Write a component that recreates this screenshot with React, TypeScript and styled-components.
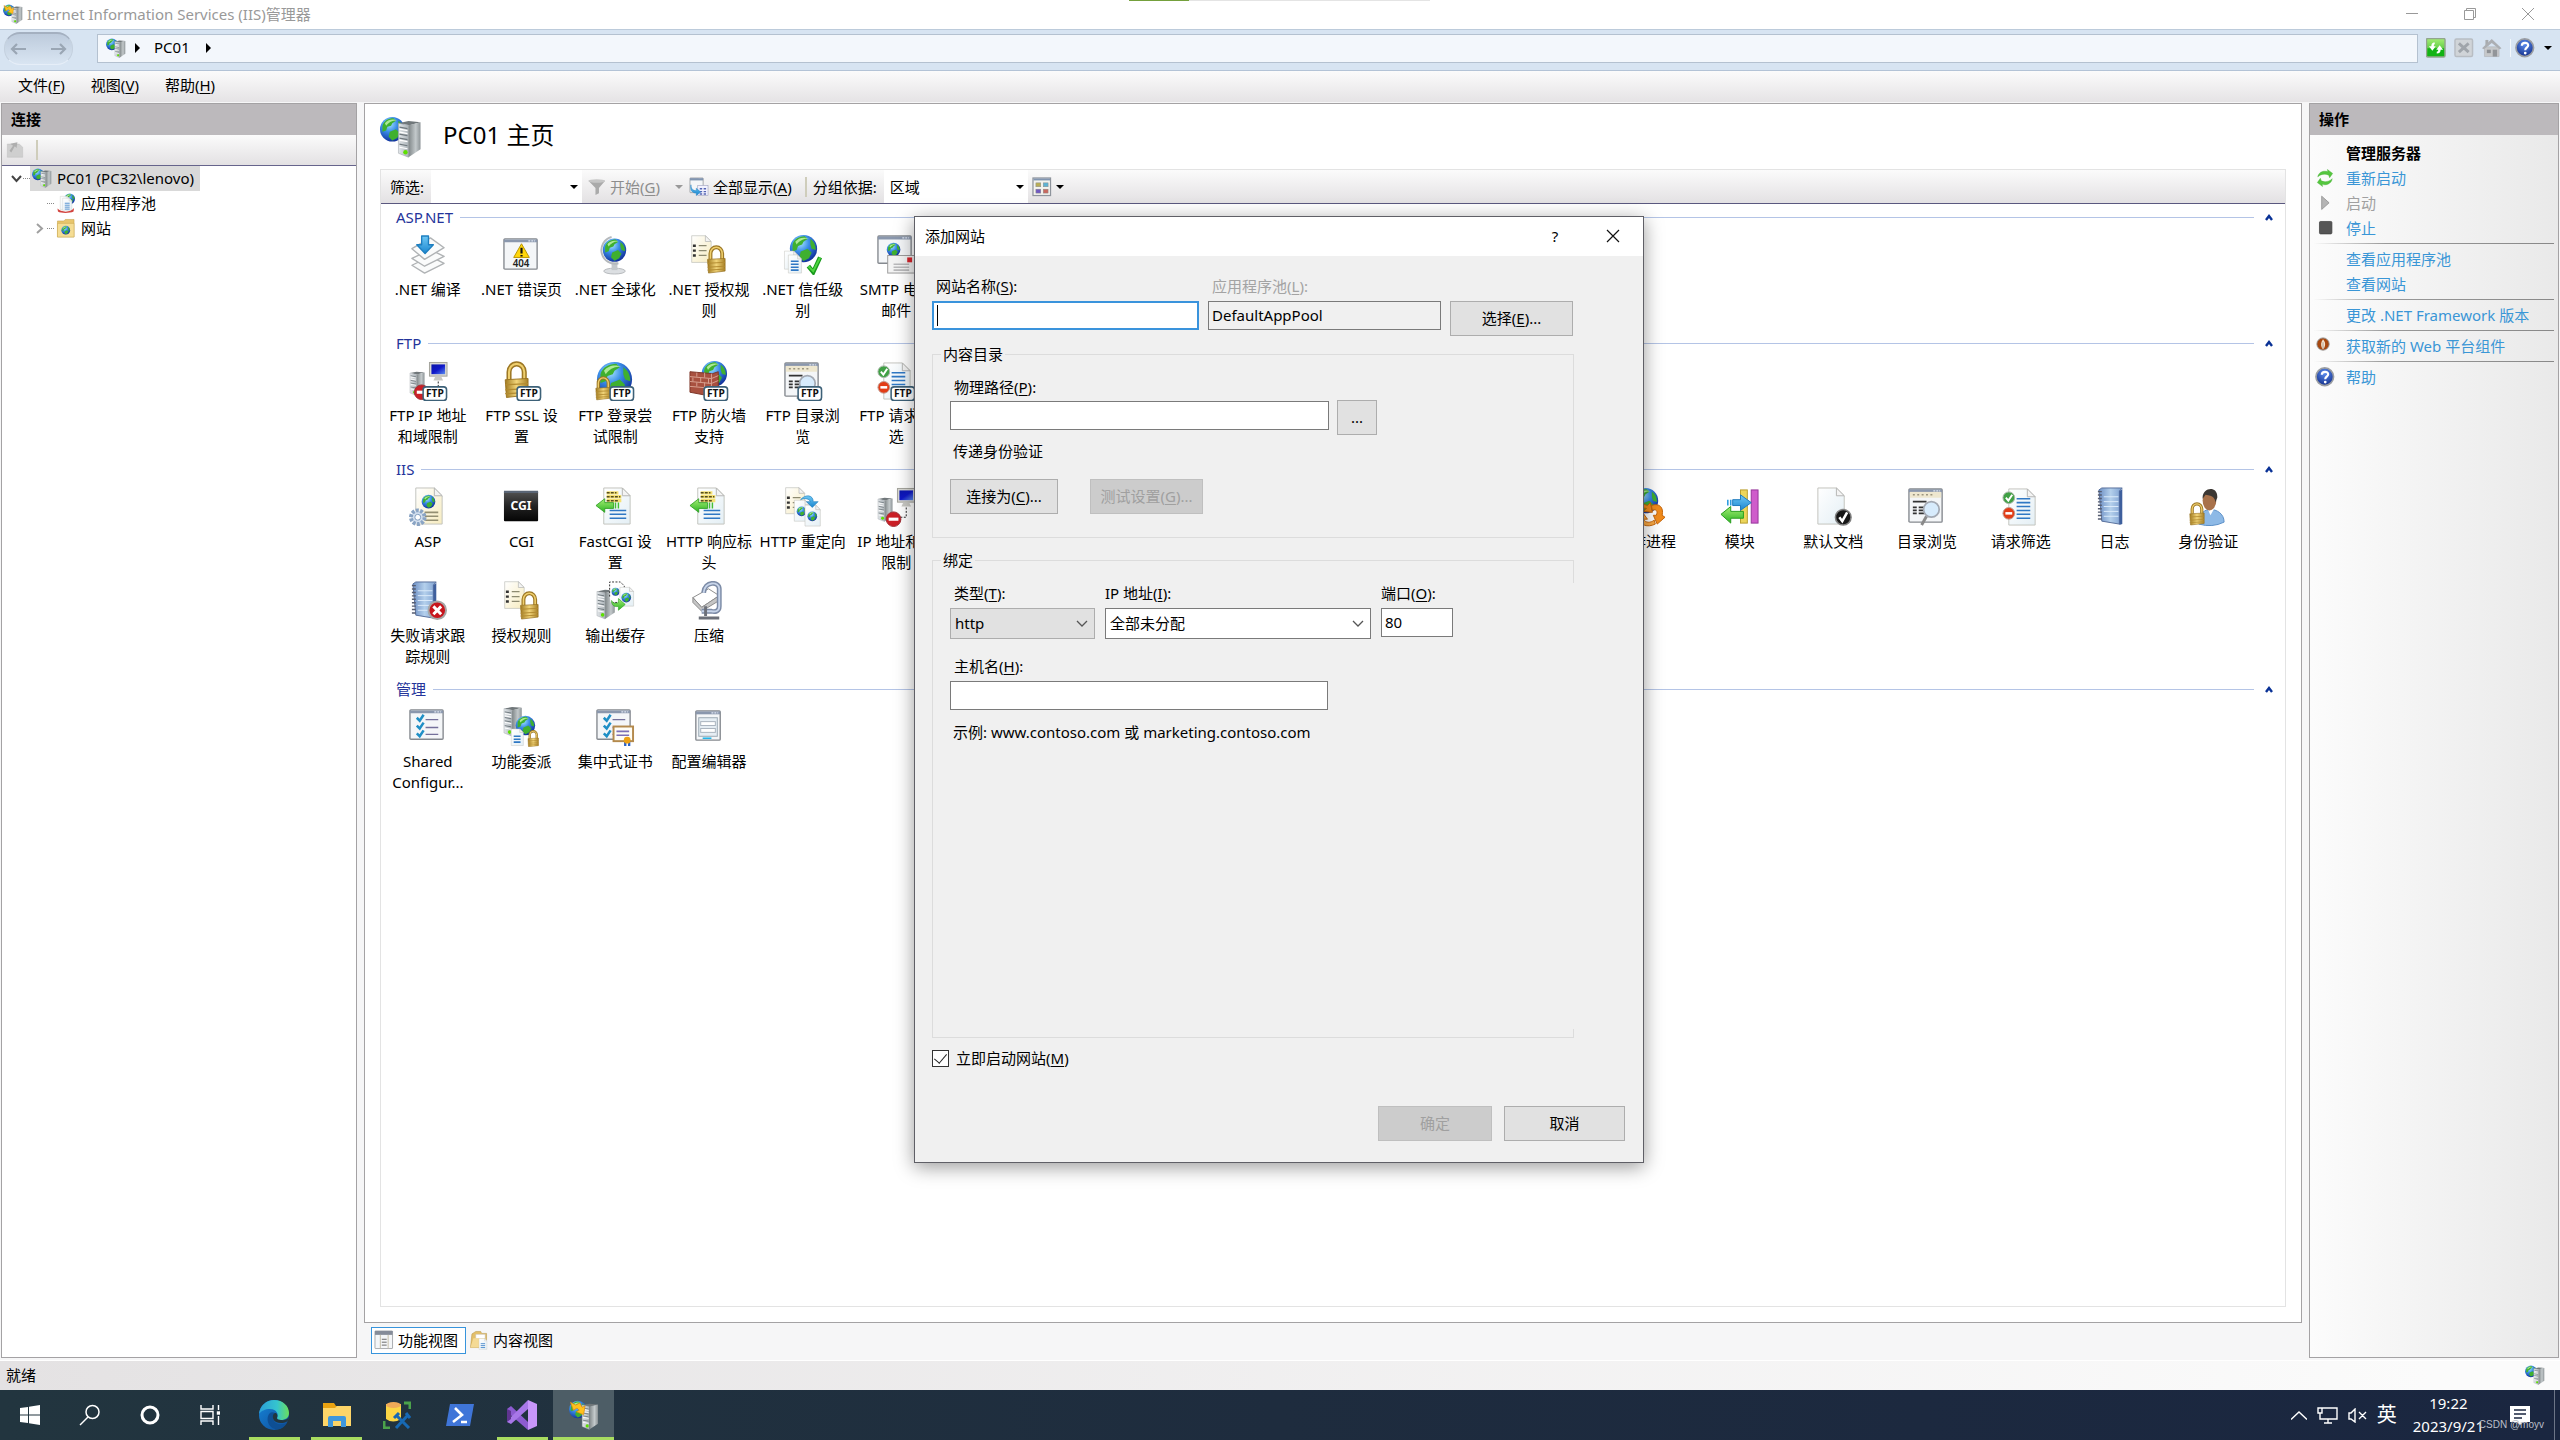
import React from "react";
import styled, { createGlobalStyle, css } from "styled-components";

const GlobalStyle = createGlobalStyle`
  * { box-sizing: border-box; }
  body {
    margin: 0;
    background: #f0f0f0;
    color: #000;
    font-family: "Noto Sans", "Noto Sans CJK SC", sans-serif;
    font-size: 15px;
    line-height: 20px;
  }
  button, input, select { font: inherit; color: inherit; margin: 0; }
  button { padding: 0; border: 0; background: none; }
  svg { display: block; flex: none; }
  u { text-underline-offset: 2px; }
`;

/* ---------- drawing primitives ---------- */

const Hidden = styled.svg`
  position: absolute;
`;

const Defs = () => (
  <Hidden width="0" height="0" aria-hidden="true">
    <defs>
      <radialGradient id="ocean" cx="0.38" cy="0.28" r="0.8">
        <stop offset="0" stopColor="#a9e6ff" />
        <stop offset="0.4" stopColor="#3b8ee8" />
        <stop offset="1" stopColor="#0a2390" />
      </radialGradient>
      <linearGradient id="steel" x1="0" x2="1">
        <stop offset="0" stopColor="#7f8688" />
        <stop offset="0.6" stopColor="#c3c9cb" />
        <stop offset="1" stopColor="#8d9497" />
      </linearGradient>
      <linearGradient id="face" x1="0" x2="1">
        <stop offset="0" stopColor="#e3e7ea" />
        <stop offset="1" stopColor="#aab2b7" />
      </linearGradient>
      <linearGradient id="gold" x1="0" x2="1">
        <stop offset="0" stopColor="#a07a20" />
        <stop offset="0.5" stopColor="#f2d57a" />
        <stop offset="1" stopColor="#a77f25" />
      </linearGradient>
      <linearGradient id="cream" x1="0" x2="1" y2="1">
        <stop offset="0" stopColor="#ffffff" />
        <stop offset="1" stopColor="#f7ecc0" />
      </linearGradient>
      <linearGradient id="paper" x1="0" x2="1" y2="1">
        <stop offset="0" stopColor="#ffffff" />
        <stop offset="1" stopColor="#e4eff5" />
      </linearGradient>
      <linearGradient id="cgi" x2="0" y2="1">
        <stop offset="0" stopColor="#555" />
        <stop offset="0.5" stopColor="#222" />
        <stop offset="1" stopColor="#050505" />
      </linearGradient>
      <linearGradient id="book" x1="0" x2="1">
        <stop offset="0" stopColor="#6d8fc4" />
        <stop offset="0.5" stopColor="#b4d0ec" />
        <stop offset="1" stopColor="#7c9fd0" />
      </linearGradient>
      <linearGradient id="screen" x2="1" y2="1">
        <stop offset="0" stopColor="#0a16a8" />
        <stop offset="0.5" stopColor="#1018c8" />
        <stop offset="1" stopColor="#5a8cf0" />
      </linearGradient>
      <linearGradient id="green" x2="0" y2="1">
        <stop offset="0" stopColor="#a5ee75" />
        <stop offset="1" stopColor="#2bb322" />
      </linearGradient>
      <linearGradient id="blue" x2="0" y2="1">
        <stop offset="0" stopColor="#6fc8f5" />
        <stop offset="1" stopColor="#1a86cf" />
      </linearGradient>
      <radialGradient id="help" cx="0.5" cy="0.3" r="0.7">
        <stop offset="0" stopColor="#5d8ff0" />
        <stop offset="1" stopColor="#132f8c" />
      </radialGradient>
      <linearGradient id="edgeTop" x1="0" x2="1">
        <stop offset="0" stopColor="#2b9fd8" />
        <stop offset="0.6" stopColor="#35c4cf" />
        <stop offset="1" stopColor="#6bdf5c" />
      </linearGradient>
      <linearGradient id="edgeBottom" x2="1" y2="1">
        <stop offset="0" stopColor="#1584d8" />
        <stop offset="1" stopColor="#0f4c98" />
      </linearGradient>
    </defs>
  </Hidden>
);

type P = { x: number; y: number; s?: number };

const at = (x: number, y: number, s = 1) => `translate(${x} ${y}) scale(${s})`;

const Globe = ({ x, y, s = 10 }: P) => (
  <g transform={at(x, y, s / 10)}>
    <circle r="10" fill="url(#ocean)" />
    <path
      d="M-8-3C-7-7-3-9 1-9L3-7 0-5-1-3-4-2-5 1-8 2ZM-2 2 3 0 6 3 4 7 0 9-3 6ZM5-7C8-5 9-2 9 1L6 0 5-3Z"
      fill="#3fb02f"
    />
    <path d="M-6-5C-4-8 1-9 4-7 1-8-3-6-5-3Z" fill="#c8f7b0" opacity="0.8" />
  </g>
);

/* tower drawn in a 22 x 36 cell */
const Tower = ({ x, y, s = 1 }: P) => (
  <g transform={at(x, y, s)}>
    <path d="M0 2 10 0 22 1 11 4Z" fill="#70777a" />
    <path d="M0 2 10 4 10 36 0 32Z" fill="url(#face)" stroke="#9aa1a5" strokeWidth="0.500" />
    <path d="M10 4 22 1 22 28 10 36Z" fill="url(#steel)" />
    <path d="M1 6 9 7.500M1 13 9 14.500M1 17 9 18.500M1 23 9 24.500" stroke="#70797e" strokeWidth="1.200" />
    <path d="M1 8 9 9.500M1 11 9 12.500M1 19 9 20.500M1 26 9 27.500" stroke="#fff" strokeWidth="1.200" />
    <circle cx="7" cy="31" r="2.200" fill="#5de000" />
  </g>
);

/* sheet drawn in a 28 x 38 cell */
const Sheet = ({ x, y, s = 1, fill = "url(#paper)" }: P & { fill?: string }) => (
  <g transform={at(x, y, s)}>
    <path d="M1 1H20L28 9V38H1Z" fill={fill} stroke="#c2c3bd" />
    <path d="M20 1V9H28Z" fill="#f4f4f4" stroke="#b5b6b4" />
  </g>
);

const Frame = ({ x, y, w, h }: { x: number; y: number; w: number; h: number }) => (
  <g>
    <rect x={x} y={y} width={w} height={h} rx="1" fill="#f4f6f8" stroke="#85898f" strokeWidth="1.4" />
    <path d={`M${x} ${y + 2}h${w}`} stroke="#8a97ad" strokeWidth="3" />
    <path d={`M${x + w - 9} ${y + 2}h7`} stroke="#dfe6f2" strokeWidth="1.2" strokeDasharray="2 1" />
  </g>
);

/* padlock drawn in a 20 x 28 cell */
const Lock = ({ x, y, s = 1 }: P) => (
  <g transform={at(x, y, s)}>
    <path d="M4 14V8a6 6.500 0 0 1 12 0V15" fill="none" stroke="#9c7724" strokeWidth="4" />
    <path d="M4 14V8a6 6.500 0 0 1 12 0V15" fill="none" stroke="#efcf6e" strokeWidth="1.600" />
    <path d="M1 14 19 13V26L2 28Z" fill="url(#gold)" stroke="#97701c" strokeWidth="0.700" />
    <path d="M1 18 19 17M1 22 19 21M1 25 19 24" stroke="#b38b30" />
  </g>
);

const Ftp = () => (
  <g>
    <rect x="15.500" y="26.500" width="24" height="14" rx="3" fill="#fff" stroke="#3d6178" strokeWidth="1.600" />
    <text x="27.500" y="37.300" fontSize="10.500" fontWeight="700" textAnchor="middle" fill="#111">FTP</text>
  </g>
);

const Bullets = ({ x, y }: P) => (
  <g transform={at(x, y)}>
    <path d="M3 12h3M3 17h3M3 22h3" stroke="#333" strokeWidth="2.400" />
    <path d="M9 12h8M9 17h8M9 22h8" stroke="#8d8a70" strokeWidth="1.300" />
  </g>
);

const Lines = ({ x, y, w, n, gap = 4, color = "#2f78c4" }: { x: number; y: number; w: number; n: number; gap?: number; color?: string }) => (
  <path
    d={Array.from({ length: n }, (_, i) => `M${x} ${y + i * gap}h${w}`).join("")}
    stroke={color}
    strokeWidth="1.600"
  />
);

const NoEntry = ({ x, y, s = 1 }: P) => (
  <g transform={at(x, y, s)}>
    <circle r="7.500" fill="#cb1f26" stroke="#9f3036" />
    <rect x="-5" y="-1.600" width="10" height="3.200" fill="#fff" />
  </g>
);

const Network = () => (
  <g>
    <Tower x={2} y={11} s={0.68} />
    <rect x="22" y="1.500" width="18" height="14" fill="#d9d9d4" stroke="#a3a39c" />
    <rect x="24" y="3.500" width="14" height="10" fill="url(#screen)" />
    <path d="M28 16h6l2 4H26Z" fill="#c9c9c4" />
    <path d="M31 21v10h-6" fill="none" stroke="#222" strokeDasharray="2 1.500" />
  </g>
);

const Browse = () => (
  <g>
    <Frame x={2} y={2} w={34} h={34} />
    <rect x="3" y="5" width="32" height="6" fill="#eee7cf" />
    <path d="M6 8h20" stroke="#9c9680" strokeWidth="1.600" strokeDasharray="2 2.500" />
    <path d="M6 15h14M6 21h4M12 21h6M6 24h4M12 24h6M6 27h4M12 27h6" stroke="#333" strokeWidth="1.800" />
    <path d="M20 30 15 39" stroke="#8a8a8a" strokeWidth="3" />
    <circle cx="25" cy="23" r="8" fill="#d7ebfc" stroke="#a3a9b3" strokeWidth="1.800" />
  </g>
);

const Filter = () => (
  <g>
    <Sheet x={7} y={1} />
    <Lines x={16} y={12} w={14} n={6} />
    <circle cx="8" cy="11" r="6" fill="#40a045" stroke="#a9b6a9" />
    <path d="M5 11 7.500 14 11.500 8" fill="none" stroke="#fff" strokeWidth="2" />
    <circle cx="8" cy="27" r="6" fill="#e23d17" stroke="#c19c92" />
    <path d="M4.500 27h7" stroke="#fff" strokeWidth="2.600" />
  </g>
);

const Rules = () => (
  <g>
    <Sheet x={2} y={0} s={0.74} fill="url(#cream)" />
    <Bullets x={1} y={-1} />
    <Lock x={18} y={11} />
  </g>
);

const Header = () => (
  <g>
    <Sheet x={8} y={0} />
    <path d="M12 6h12M12 10h15M12 14h15" stroke="#f5e173" strokeWidth="3.500" />
    <path d="M12 6h10M12 10h14M12 14h12" stroke="#554d1e" strokeWidth="1.500" strokeDasharray="3 1.200" />
    <Lines x={15} y={24} w={17} n={3} />
    <path d="M1 19 10 12V16H19V22H10V26Z" fill="url(#green)" stroke="#259a1b" strokeWidth="0.800" />
    <path d="M21 16v6M24 16v6" stroke="#45be35" strokeWidth="1.500" />
  </g>
);

const Notebook = () => (
  <g>
    <path d="M5 3 8 1H29L26 4V38L8 35Z" fill="url(#book)" stroke="#576f9b" />
    <path d="M26 4 29 2V38L26 39Z" fill="#3e5f9d" />
    <path d="M10 10H25M10 15H25M10 20H25M10 25H25M10 30H25" stroke="#dbeafa" strokeWidth="1" />
    <path d="M6 4V35" stroke="#555c70" strokeWidth="4" strokeDasharray="1.500 2" />
  </g>
);

const Checklist = () => (
  <g>
    <Frame x={2} y={3} w={34} h={30} />
    <path d="M9 11l3 3 4-6M9 19l3 3 4-6M9 27l3 3 4-6" fill="none" stroke="#1f8fc6" strokeWidth="2.600" />
    <path d="M18 13h13M18 21h13M18 28h13" stroke="#74709a" strokeWidth="1.400" />
  </g>
);

const SiteServer = () => (
  <g>
    <Globe x={12} y={13} s={12} />
    <Tower x={18} y={5} s={0.98} />
  </g>
);

const drawings: Record<string, React.ReactNode> = {
  siteServer: <SiteServer />,
  manager: (
    <g>
      <SiteServer />
      <path d="M2 3 9 7 15 4 18 10 22 8 20 20 10 16 14 14 11 11 6 14Z" fill="#ffc21c" stroke="#d9861a" />
    </g>
  ),
  compile: (
    <g fill="#fafbfb" stroke="#b0b3b5" strokeWidth="1.400" strokeLinejoin="round">
      <path d="M4 31 23 22 37 29 17 39Z" />
      <path d="M4 24 23 15 37 22 17 32Z" />
      <path d="M4 14 23 3 37 13 17 25Z" />
      <path d="M14 1h7v9h5l-8.500 9L9 10h5Z" fill="url(#blue)" stroke="#1e7fc0" />
    </g>
  ),
  error404: (
    <g>
      <Frame x={2} y={4} w={34} h={31} />
      <path d="M20 9 28 23H12Z" fill="#ffd60a" stroke="#b99400" strokeLinejoin="round" />
      <path d="M20 13v6M20 20.500v1.500" stroke="#111" strokeWidth="2.200" />
      <text x="19.500" y="33" fontSize="10" fontWeight="600" textAnchor="middle" fill="#222">404</text>
    </g>
  ),
  globalize: (
    <g>
      <ellipse cx="20" cy="37" rx="11" ry="3" fill="#dcdfe2" stroke="#b6b9bc" />
      <path d="M20 28v8" stroke="#c4c8cb" strokeWidth="6" />
      <path d="M17 2A13.500 13.500 0 0 0 24 29" fill="none" stroke="#b5b9bc" strokeWidth="2" />
      <Globe x={20} y={15.5} s={12} />
    </g>
  ),
  rules: <Rules />,
  trust: (
    <g>
      <Globe x={21} y={14} s={14} />
      <Sheet x={1} y={16} s={0.5} />
      <Sheet x={5} y={20} s={0.5} />
      <Lines x={8} y={27} w={8} n={4} gap={3} />
      <path d="M26 32 31 38 38 23" fill="none" stroke="#1a9a1d" strokeWidth="4.500" />
      <path d="M26 32 31 37 38 23" fill="none" stroke="#4fd63f" strokeWidth="2" />
    </g>
  ),
  smtp: (
    <g>
      <Frame x={2} y={1} w={34} h={28} />
      <Globe x={18} y={15} s={7} />
      <rect x="12" y="21" width="28" height="18" fill="#f3f3f3" stroke="#9a9a9a" />
      <Lines x={18} y={30} w={16} n={3} gap={3} color="#b9b9bb" />
      <rect x="32" y="23" width="5" height="5" fill="#d8242c" />
    </g>
  ),
  ftpIp: <g><Network /><NoEntry x={14} y={32} /><Ftp /></g>,
  ftpSsl: <g><Lock x={2} y={1} s={1.3} /><Ftp /></g>,
  ftpLogin: <g><Globe x={20} y={19} s={18} /><Lock x={0} y={16} s={0.85} /><Ftp /></g>,
  ftpWall: (
    <g>
      <Globe x={26} y={13} s={13} />
      <path d="M1 11 24 13 30 11V32L22 36 1 32Z" fill="#a8503f" stroke="#7d3528" />
      <path d="M1 16 23 18 30 15M1 21 23 23 30 20M1 26 23 28M8 12v4M16 12v5M4 17v4M12 17v5M20 18v5M8 22v4M16 22v5M23 13v22" fill="none" stroke="#d8a090" />
      <Ftp />
    </g>
  ),
  ftpBrowse: <g><Browse /><Ftp /></g>,
  ftpFilter: <g><Filter /><Ftp /></g>,
  asp: (
    <g>
      <Sheet x={7} y={0} fill="url(#cream)" />
      <Globe x={21} y={15} s={7} />
      <Lines x={17} y={26} w={14} n={3} color="#948f72" />
      <circle cx="10" cy="31" r="7" fill="#d4e0ef" stroke="#8aa4c4" strokeWidth="4" strokeDasharray="3 1.400" />
      <circle cx="10" cy="31" r="3" fill="#fff" stroke="#7f9bbd" />
    </g>
  ),
  cgi: (
    <g>
      <rect x="2" y="4" width="35" height="31" rx="1" fill="url(#cgi)" />
      <path d="M2 5h35" stroke="#5a6575" strokeWidth="2.500" />
      <text x="19.500" y="24" fontSize="12.500" fontWeight="700" textAnchor="middle" fill="#fff">CGI</text>
    </g>
  ),
  header: <Header />,
  redirect: (
    <g>
      <Sheet x={2} y={0} s={0.72} fill="url(#cream)" />
      <Bullets x={1} y={-1} />
      <Sheet x={11} y={13} s={0.58} />
      <Globe x={19} y={25} s={5} />
      <Sheet x={22} y={18} s={0.58} />
      <Globe x={30} y={30} s={5} />
      <path d="M18 13C23 7 31 8 31 15H36L30 21 24 15H28C27 12 22 11 18 13Z" fill="url(#blue)" stroke="#1c7ab8" strokeWidth="0.600" />
    </g>
  ),
  ip: <g><Network /><NoEntry x={18} y={33} /></g>,
  worker: (
    <g>
      <Globe x={20} y={14} s={13} />
      <path d="M10 24C12 17 18 17 22 19L25 16 27 26 18 25 21 22C17 21 15 23 15 27Z" fill="#f28c1c" stroke="#c46408" />
      <path d="M26 19C34 16 39 21 37 29L40 31 32 38 28 29 31 29C33 25 31 22 27 24Z" fill="#f28c1c" stroke="#c46408" />
      <path d="M30 38C22 42 14 39 13 32L10 31 17 26 22 33H18C20 37 25 37 29 34Z" fill="#f9a945" stroke="#c46408" />
    </g>
  ),
  modules: (
    <g>
      <rect x="21" y="3" width="7" height="34" fill="#ecd55a" stroke="#b89d2c" />
      <rect x="32" y="3" width="7" height="34" fill="#cf5ccb" stroke="#96369a" />
      <path d="M13 13h8V8l11 8-11 8v-5h-8Z" fill="url(#blue)" stroke="#1c79bd" />
      <path d="M8 13v6M11 13v6" stroke="#2b9be0" strokeWidth="1.600" />
      <path d="M1 28 11 20v5h13v7H11v5Z" fill="url(#green)" stroke="#269c1d" />
    </g>
  ),
  defaultDoc: (
    <g>
      <Sheet x={4} y={0} />
      <circle cx="31" cy="31" r="8" fill="#161616" stroke="#808080" strokeWidth="1.600" />
      <path d="M27 31 30 35 35 26" fill="none" stroke="#fff" strokeWidth="2.600" />
    </g>
  ),
  browse: <Browse />,
  filter: <Filter />,
  log: <Notebook />,
  auth: (
    <g>
      <path d="M11 38C11 27 17 23 23 23S37 27 37 36Q25 42 11 38Z" fill="#8db9e6" stroke="#5c8fc6" />
      <path d="M20 22 23 29 27 22Z" fill="#fff" />
      <ellipse cx="22" cy="14" rx="7" ry="10" fill="#a8714a" />
      <path d="M15 12C14 0 31-2 30 11L28 16C28 12 26 9 18 8Z" fill="#3c3733" />
      <Lock x={1} y={16} s={0.82} />
    </g>
  ),
  failed: (
    <g>
      <Notebook />
      <circle cx="30" cy="30" r="9" fill="#c8161d" stroke="#a6a6a6" strokeWidth="2" />
      <path d="M26 26 34 34M34 26 26 34" stroke="#fff" strokeWidth="3" />
    </g>
  ),
  cache: (
    <g>
      <Tower x={2} y={9} s={0.83} />
      <path d="M15 16V1H26L30 5V22H16" fill="#fff" stroke="#333" strokeDasharray="2 1.500" />
      <Globe x={21} y={11} s={4} />
      <Sheet x={25} y={6} s={0.52} />
      <Globe x={32} y={17} s={5} />
      <path d="M17 20C19 24 22 23 24 22V18L31 24 24 30V26C20 27 17 25 17 20Z" fill="url(#green)" stroke="#249c1b" strokeWidth="0.600" />
    </g>
  ),
  compress: (
    <g>
      <path d="M4 17 20 8 31 15 13 27Z" fill="#fff" stroke="#8b8b8b" />
      <path d="M4 17V22L13 31 31 20V15L13 27Z" fill="#c5c5c5" stroke="#8b8b8b" />
      <path d="M15 12C16 0 31 0 31 8V26C31 31 27 32 23 31H13" fill="none" stroke="#7c8ba6" strokeWidth="5" />
      <path d="M15 12C16 0 31 0 31 8V26C31 31 27 32 23 31H13" fill="none" stroke="#c8d5ea" strokeWidth="2" />
      <path d="M17 26v10M10 38H31" stroke="#6c7079" strokeWidth="3" />
    </g>
  ),
  checklist: <Checklist />,
  delegate: (
    <g>
      <Tower x={2} y={0} s={0.83} />
      <Globe x={24} y={19} s={10} />
      <Sheet x={9} y={22} s={0.46} />
      <Lines x={12} y={30} w={7} n={3} gap={3} />
      <Lock x={26} y={24} s={0.6} />
    </g>
  ),
  cert: (
    <g>
      <Checklist />
      <rect x="19" y="20" width="20" height="15" fill="#fffdf5" stroke="#b48a4d" strokeWidth="2" />
      <Lines x={22} y={25} w={13} n={2} color="#7d6fb6" />
      <path d="M31 34v6M35 34v6" stroke="#2a62c8" strokeWidth="2.400" />
      <circle cx="33" cy="34" r="3.500" fill="#eda013" />
    </g>
  ),
  editor: (
    <g>
      <Frame x={7} y={4} w={25} h={30} />
      <rect x="10" y="11" width="19" height="19" fill="#e6eef4" stroke="#9aa7b2" />
      <rect x="12" y="15" width="15" height="4" fill="#fff" stroke="#a8b2bd" />
      <rect x="12" y="22" width="15" height="4" fill="#fff" stroke="#a8b2bd" />
      <path d="M14 32h9" stroke="#23b5e8" strokeWidth="1.600" />
    </g>
  ),
  pool: (
    <g>
      <Globe x={28} y={12} s={11} />
      <Sheet x={8} y={6} s={0.74} />
      <Sheet x={13} y={10} s={0.7} />
      <Lines x={18} y={21} w={10} n={4} />
      <path d="M3 32C10 40 30 41 37 31L36 38C28 42 10 42 4 38Z" fill="#d2433e" />
    </g>
  ),
  sites: (
    <g>
      <path d="M3 6H16L19 3H37V39H3Z" fill="#e8c66d" stroke="#bf9a3f" />
      <path d="M3 11H37V39H3Z" fill="#f5dd94" stroke="#c7a34b" />
      <Globe x={20} y={25} s={9} />
    </g>
  ),
  content: (
    <g>
      <path d="M3 36 6 8 14 3H24L26 7H36V20L30 36Z" fill="#e3bf6a" stroke="#b18c3b" />
      <path d="M14 9H33V18H14Z" fill="#fff" stroke="#c9c9c9" />
      <path d="M3 36 9 17H34L29 36Z" fill="#f4da95" />
      <Sheet x={20} y={17} s={0.6} />
      <Lines x={24} y={28} w={9} n={3} />
    </g>
  ),
  featureView: (
    <g>
      <Frame x={2} y={2} w={36} h={36} />
      <path d="M2 6h36" stroke="#858c99" strokeWidth="8" />
      <path d="M13 10V38M29 10V38" stroke="#c4bea8" strokeWidth="2" />
      <Lines x={16} y={19} w={10} n={3} gap={6} color="#444" />
    </g>
  ),
  funnel: (
    <g>
      <path d="M1 6H39L25 23V35L17 39V23Z" fill="#aaa" />
      <ellipse cx="20" cy="7" rx="19" ry="4" fill="#c6c6c6" />
    </g>
  ),
  showAll: (
    <g>
      <Frame x={2} y={2} w={27} h={30} />
      <path d="M2 5h27" stroke="#8195b0" strokeWidth="4" />
      <rect x="18" y="17" width="21" height="21" fill="#f2f2ff" stroke="#8b8fae" />
      <path d="M22 24h5M30 24h5M22 30h5M30 30h5M22 35h5M30 35h5" stroke="#5564b3" strokeWidth="3" />
      <path d="M4 16C4 26 10 28 15 28V23L24 31 15 38V33C6 33 2 27 4 16Z" fill="url(#blue)" stroke="#1d7cc0" />
    </g>
  ),
  viewMode: (
    <g>
      <rect x="2" y="2" width="36" height="36" fill="#f4f3ee" stroke="#8e949c" strokeWidth="2.500" />
      <path d="M3 5h34" stroke="#8195b0" strokeWidth="4" />
      <g stroke="#8b8b8b">
        <rect x="8" y="12" width="10" height="8" fill="#b9ae55" />
        <rect x="23" y="12" width="10" height="8" fill="#5db3d4" />
        <rect x="8" y="25" width="10" height="8" fill="#7059c0" />
        <rect x="23" y="25" width="10" height="8" fill="#c9685e" />
      </g>
    </g>
  ),
  connect: (
    <g>
      <path d="M3 7H30L38 14V37H3Z" fill="#cfcfcf" stroke="#bababa" />
      <path d="M10 6 26 3 24 16 20 12 12 26 8 22 16 11Z" fill="#aeaeae" />
    </g>
  ),
  goRefresh: (
    <g>
      <rect x="1" y="1" width="38" height="38" rx="3" fill="url(#green)" stroke="#92a58e" strokeWidth="3" />
      <rect x="3" y="21" width="34" height="16" fill="#11b314" />
      <path d="M18 9C12 9 11 13 11 17H6L13 26 20 17H16C16 14 17 13 18 13Z" fill="#fff" />
      <path d="M22 32C28 32 30 28 30 24H35L28 15 21 24H25C25 27 24 28 22 28Z" fill="#fff" />
    </g>
  ),
  stopNav: (
    <g>
      <rect x="2" y="2" width="36" height="36" rx="3" fill="#d0d4d8" stroke="#b8bdc3" strokeWidth="3" />
      <path d="M10 11 30 29M30 11 10 29" stroke="#a0a5ab" strokeWidth="6" />
    </g>
  ),
  home: (
    <g>
      <path d="M5 18H35V38H5Z" fill="#c6c8ca" stroke="#a7aaae" />
      <path d="M7 4h6v12H7Z" fill="#a8abae" />
      <path d="M0 21 20 2 40 21 36 23 20 10 4 23Z" fill="#acafb3" />
      <path d="M22 24h9v14h-9Z" fill="#929599" />
      <path d="M10 24h8v7h-8Z" fill="#8e9195" />
    </g>
  ),
  help: (
    <g>
      <circle cx="20" cy="20" r="18" fill="url(#help)" stroke="#9a9da2" strokeWidth="3.500" />
      <path d="M14 16C14 8 27 8 27 15 27 20 21 19 21 25" fill="none" stroke="#fff" strokeWidth="4.500" />
      <circle cx="21" cy="31" r="2.800" fill="#fff" />
    </g>
  ),
  restart: (
    <g fill="#55c63f" stroke="#39a829" strokeWidth="0.800">
      <path d="M4 18C6 6 18 3 27 6L26 1 38 10 31 20 29 14C20 10 10 12 4 18Z" />
      <path d="M37 22C35 34 23 38 14 35L15 40 3 31 10 21 12 27C21 31 31 28 37 22Z" />
    </g>
  ),
  start: <path d="M12 3 31 20 12 37Z" fill="#b5b5b5" stroke="#8e8e8e" strokeWidth="2" />,
  stop: <rect x="4" y="4" width="34" height="34" rx="3" fill="#555" stroke="#3f3f3f" strokeWidth="2" />,
  webpi: (
    <g>
      <circle cx="16" cy="16" r="14" fill="#a84911" stroke="#8d8d8d" strokeWidth="2" />
      <path d="M16 5C22 12 22 18 18 26H14C10 18 11 12 16 5Z" fill="#f5e4cf" />
      <path d="M16 12V28" stroke="#c3b2a0" strokeWidth="3" />
    </g>
  ),
};

const Icon = ({ name, size = 20 }: { name: string; size?: number }) => (
  <svg width={size} height={size} viewBox="0 0 41 41" aria-hidden="true">
    {drawings[name]}
  </svg>
);

const DropArrow = ({ muted }: { muted?: boolean }) => (
  <svg width="8" height="4" viewBox="0 0 8 4" aria-hidden="true">
    <path d="M0 0H8L4 4Z" fill={muted ? "#999" : "#000"} />
  </svg>
);

const RightArrow = () => (
  <svg width="5" height="10" viewBox="0 0 5 10" aria-hidden="true">
    <path d="M0 0 5 5 0 10Z" fill="#000" />
  </svg>
);

/* ---------- window chrome ---------- */

const Desktop = styled.div`
  position: relative;
  display: flex;
  flex-direction: column;
  min-height: 100vh;
`;

const TitleBar = styled.header`
  display: flex;
  align-items: center;
  gap: 4px;
  height: 29px;
  padding: 0 3px 2px;
  background: #fff;
  color: #999;
`;

const WindowTitle = styled.h1`
  flex: 1;
  margin: 0;
  font-size: 15px;
  font-weight: 400;
  line-height: 20px;
`;

const WindowButtons = styled.div`
  display: flex;
`;

const WindowButton = styled.button`
  display: grid;
  place-items: center;
  width: 58px;
  height: 27px;
`;

const TopMark = styled.div`
  position: absolute;
  top: 0;
  left: 1129px;
  width: 301px;
  height: 1px;
  background: linear-gradient(90deg, #74a03c 60px, #e4e4e4 60px);
`;

const AddressBar = styled.div`
  display: flex;
  align-items: center;
  gap: 8px;
  height: 42px;
  padding: 0 8px 4px 4px;
  background: #d7e4f2;
  border-top: 1px solid #bccbdb;
  border-bottom: 1px solid #b3c3d6;
`;

const NavButtons = styled.div`
  display: flex;
  justify-content: space-between;
  align-items: center;
  width: 69px;
  height: 33px;
  margin-right: 16px;
  padding: 0 5px;
  border-radius: 16px;
  border: 1px solid #c4d0de;
  border-top: 2px solid #a4b0c0;
  border-bottom-color: #e6eef8;
  background: linear-gradient(#bdcbdc, #d9e5f2);
`;

const Crumbs = styled.nav`
  flex: 1;
  display: flex;
  align-items: center;
  height: 29px;
  padding-left: 8px;
  gap: 9px;
  background: #f3f7fc;
  border: 1px solid #b4c1d0;
`;

const CrumbButton = styled.button`
  padding: 0 7px 2px 5px;
`;

const ToolButton = styled.button`
  display: flex;
  align-items: center;
  gap: 9px;
`;

const VLine = styled.span`
  width: 1px;
  height: 18px;
  margin-right: -4px;
  background: #f4f8fc;
`;

const MenuBar = styled.nav`
  display: flex;
  align-items: center;
  gap: 26px;
  height: 31px;
  padding: 0 0 3px 18px;
  background: linear-gradient(#fbfbfb, #e5e3e5);
`;

const Workspace = styled.main`
  flex: 1;
  display: flex;
  gap: 7px;
  padding: 1px 1px 2px;
  background: #f6f6f7;
`;

const panel = css`
  border: 1px solid #a4a2a4;
  background: #fff;
`;

const Connections = styled.aside`
  ${panel}
  width: 356px;
`;

const PanelHeading = styled.h2`
  margin: 0;
  padding: 0 9px;
  background: #bcb9bc;
  font-size: 15px;
  font-weight: 700;
  line-height: 31px;
`;

const PanelTools = styled.div`
  display: flex;
  align-items: center;
  gap: 12px;
  height: 31px;
  padding-left: 4px;
  background: linear-gradient(#fbfbfb, #e3e1e3);
  border-bottom: 1px solid #66648c;
`;

const ToolDivider = styled.span`
  width: 2px;
  height: 20px;
  background: #cfcdbb;
`;

const Tree = styled.ul`
  list-style: none;
  margin: 0;
  padding: 0;
`;

const TreeRow = styled.div<{ $depth: number }>`
  display: flex;
  align-items: center;
  height: 25px;
  padding-left: ${(p) => 7 + p.$depth * 24}px;
`;

const TreeToggle = styled.span`
  display: grid;
  place-items: center;
  width: 14px;
`;

const TreeStem = styled.span`
  width: 7px;
  border-top: 1px dotted #888;
`;

const TreeBranch = styled(TreeStem)`
  align-self: stretch;
  width: 14px;
  margin: 0 -7px 0 0;
  border-top: 0;
  background:
    linear-gradient(90deg, #999, #999) 0 50% / 14px 1px no-repeat,
    linear-gradient(#999, #999) 0 0 / 1px 100% no-repeat;
`;

const TreeLabel = styled.button<{ $selected?: boolean }>`
  display: flex;
  align-items: center;
  gap: 5px;
  height: 25px;
  padding: 0 6px 2px 2px;
  background: ${(p) => (p.$selected ? "#d9d9d9" : "transparent")};
`;

/* ---------- feature pane ---------- */

const Center = styled.section`
  flex: 1;
  display: flex;
  flex-direction: column;
  min-width: 0;
`;

const Home = styled.div`
  ${panel}
  flex: 1;
  display: flex;
  flex-direction: column;
  padding: 0 15px 15px;
`;

const HomeHeader = styled.div`
  display: flex;
  align-items: center;
  gap: 21px;
  height: 65px;
`;

const HomeTitle = styled.h2`
  margin: 0;
  padding-bottom: 3px;
  font-size: 24px;
  font-weight: 400;
  line-height: 32px;
`;

const FeatureBox = styled.div`
  flex: 1;
  border: 1px solid #e3e3e3;
`;

const FeatureTools = styled.div`
  display: flex;
  align-items: center;
  height: 34px;
  padding-left: 9px;
  background: linear-gradient(#fbfbfb, #e3e1e3);
  border-bottom: 1px solid #5a587f;
`;

const Combo = styled.div<{ $w: number }>`
  display: flex;
  align-items: center;
  align-self: stretch;
  width: ${(p) => p.$w}px;
  margin-left: 7px;
  padding-right: 4px;
  background: #fff;
`;

const comboField = css`
  appearance: none;
  flex: 1;
  min-width: 0;
  height: 28px;
  padding: 0 6px;
  border: 0;
  border-radius: 0;
  background: transparent;
`;

const ComboInput = styled.input`
  ${comboField}
`;

const ComboSelect = styled.select`
  ${comboField}
`;

const BarButton = styled.button<{ $ml: number; $muted?: boolean }>`
  display: flex;
  align-items: center;
  gap: 4px;
  margin-left: ${(p) => p.$ml}px;
  color: ${(p) => (p.$muted ? "#8d8d8d" : "#000")};
`;

const BarDivider = styled(ToolDivider)`
  margin: 0 6px 0 13px;
`;

const GroupHeading = styled.h3`
  display: flex;
  align-items: center;
  gap: 7px;
  height: 26px;
  margin: 0;
  padding: 0 12px 0 15px;
  color: #24349a;
  font-size: 15px;
  font-weight: 400;
`;

const GroupLine = styled.span`
  flex: 1;
  height: 1px;
  margin-right: 4px;
  background: #b4c4e6;
`;

const FeatureGrid = styled.ul`
  display: grid;
  grid-template-columns: repeat(auto-fill, minmax(93px, 1fr));
  list-style: none;
  margin: 0;
  padding: 5px 30px 1px 0;
`;

const FeatureCell = styled.li<{ $col?: number }>`
  height: 94px;
  grid-column-start: ${(p) => p.$col ?? "auto"};
`;

const FeatureButton = styled.button`
  display: flex;
  flex-direction: column;
  align-items: center;
  gap: 4px;
  width: 100%;
  line-height: 21px;
  white-space: nowrap;
`;

const ViewTabs = styled.div`
  display: flex;
  align-items: center;
  height: 35px;
  padding: 0 7px 1px;
`;

const ViewTab = styled.button<{ $active?: boolean }>`
  display: flex;
  align-items: center;
  gap: 4px;
  height: 27px;
  padding: 0 7px 0 2px;
  border: 1px solid ${(p) => (p.$active ? "#3794dc" : "transparent")};
  background: ${(p) => (p.$active ? "#fff" : "transparent")};
`;

/* ---------- actions ---------- */

const Actions = styled.aside`
  ${panel}
  width: 250px;
  background: linear-gradient(90deg, #fcfcfc, #e9e9e9);
`;

const ActionList = styled.ul`
  list-style: none;
  margin: 0;
  padding: 5px 4px 0;
`;

const ActionRow = styled.li<{ $divided?: boolean }>`
  padding-bottom: ${(p) => (p.$divided ? 3 : 0)}px;
  margin-bottom: ${(p) => (p.$divided ? 2 : 0)}px;
  border-bottom: ${(p) => (p.$divided ? "1px solid" : "0")};
  border-image: linear-gradient(90deg, transparent, #999 30%, #888) 1;
`;

const actionFace = css`
  display: flex;
  align-items: center;
  gap: 11px;
  height: 25px;
  padding-left: 1px;
`;

const ActionLink = styled.a`
  ${actionFace}
  color: #3a96d6;
  text-decoration: none;
`;

const ActionDisabled = styled.button`
  ${actionFace}
  color: #a0a0a0;
`;

const ActionTitle = styled.strong`
  ${actionFace}
  font-weight: 700;
`;

const ActionIcon = styled.span`
  display: grid;
  place-items: center;
  width: 20px;
  height: 20px;
`;

/* ---------- status and taskbar ---------- */

const StatusBar = styled.footer`
  display: flex;
  justify-content: space-between;
  align-items: center;
  height: 30px;
  padding: 0 15px 2px 6px;
  border-top: 1px solid #fff;
  background: linear-gradient(90deg, #e4e2e3, #fbfbfb 95%);
`;

const Taskbar = styled.div`
  display: flex;
  align-items: stretch;
  height: 50px;
  background: linear-gradient(90deg, #22353f, #1e2c3e 50%, #1a2640);
  color: #fff;
`;

const TaskButton = styled.button<{ $w: number; $line?: boolean; $active?: boolean }>`
  display: grid;
  place-items: center;
  width: ${(p) => p.$w}px;
  background-color: ${(p) => (p.$active ? "#4d5d66" : "transparent")};
  ${(p) => (p.$line || p.$active) && css`
    background-image: linear-gradient(#a8dc60, #a8dc60);
    background-repeat: no-repeat;
    background-position: center bottom;
    background-size: ${p.$active ? "100%" : "51px"} 3px;
  `}
`;

const Tray = styled.div`
  display: flex;
  align-items: center;
  gap: 10px;
  margin-left: auto;
  padding-right: 5px;
`;

const Language = styled.span`
  font-size: 20px;
  line-height: 28px;
`;

const Clock = styled.time`
  display: flex;
  flex-direction: column;
  align-items: center;
  margin: 0 16px 0 6px;
  line-height: 23px;
`;

const Watermark = styled.span`
  position: absolute;
  right: 16px;
  bottom: 8px;
  color: #b9bec8;
  font-family: "Liberation Sans", sans-serif;
  font-size: 10px;
  line-height: 14px;
`;

const TrayEnd = styled.span`
  width: 1px;
  height: 50px;
  margin-left: 14px;
  background: #6c7587;
`;

/* ---------- dialog ---------- */

const DialogLayer = styled.div`
  position: absolute;
  inset: 0;
  display: flex;
  justify-content: center;
  align-items: flex-start;
  padding: 216px 2px 0 0;
`;

const Dialog = styled.form`
  width: 730px;
  border: 1px solid #5f5f66;
  background: #f0f0f0;
  box-shadow: 0 4px 18px rgba(0, 0, 0, 0.4);
`;

const DialogTitle = styled.div`
  display: flex;
  align-items: center;
  height: 39px;
  padding: 0 1px 2px 10px;
  background: #fff;
`;

const DialogHeading = styled.h2`
  flex: 1;
  margin: 0;
  font-size: 15px;
  font-weight: 400;
`;

const DialogBody = styled.div`
  padding: 20px 69px 0 17px;
`;

const FieldRow = styled.div<{ $gap: number; $mt?: number }>`
  display: flex;
  align-items: flex-start;
  gap: ${(p) => p.$gap}px;
  margin-top: ${(p) => p.$mt ?? 0}px;
`;

const Field = styled.div<{ $w: number; $gap?: number }>`
  display: flex;
  flex-direction: column;
  gap: ${(p) => p.$gap ?? 5}px;
  width: ${(p) => p.$w}px;
`;

const FieldLabel = styled.label<{ $muted?: boolean; $indent?: number }>`
  height: 20px;
  padding-left: ${(p) => p.$indent ?? 4}px;
  color: ${(p) => (p.$muted ? "#a3a3a3" : "#000")};
`;

const TextBox = styled.input<{ $h?: number }>`
  width: 100%;
  height: ${(p) => p.$h ?? 29}px;
  padding: 0 3px 2px;
  border: 1px solid #7a7a7a;
  border-radius: 0;
  background: #fff;
  &:read-only { background: #f0f0f0; }
`;

const ActiveTextBox = styled(TextBox)`
  border: 2px solid #3a93dc;
  background: linear-gradient(#000, #000) 3px 50% / 1px 21px no-repeat #fff;
`;

const PushButton = styled.button<{ $w: number }>`
  width: ${(p) => p.$w}px;
  height: 35px;
  padding-bottom: 2px;
  border: 1px solid #adadad;
  background: #e1e1e1;
  &:disabled { background: #cccccc; border-color: #bfbfbf; color: #a0a0a0; }
`;

const PickButton = styled(PushButton)<{ $mt: number }>`
  margin-top: ${(p) => p.$mt}px;
`;

const Group = styled.fieldset<{ $mt: number }>`
  min-width: 0;
  margin: ${(p) => p.$mt}px 0 0;
  padding: 13px 17px 23px;
  border: 1px solid #dcdcdc;
`;

/* the right edge of this group only shows at its two corners */
const BindingGroup = styled(Group)`
  min-height: 488px;
  border-right: 0;
  background:
    linear-gradient(#dcdcdc, #dcdcdc) 100% 0 / 1px 22px no-repeat,
    linear-gradient(#dcdcdc, #dcdcdc) 100% 100% / 1px 8px no-repeat;
`;

const Legend = styled.legend`
  margin-left: -9px;
  padding: 0 2px;
`;

const Note = styled.p<{ $mt: number }>`
  height: 20px;
  margin: ${(p) => p.$mt}px 0 0;
  padding-left: 3px;
`;

const SelectBox = styled.div<{ $grey?: boolean }>`
  display: flex;
  align-items: center;
  height: 31px;
  padding-right: 6px;
  border: 1px solid ${(p) => (p.$grey ? "#adadad" : "#7a7a7a")};
  background: ${(p) => (p.$grey ? "#e1e1e1" : "#fff")};
`;

const SelectField = styled.select`
  appearance: none;
  flex: 1;
  min-width: 0;
  height: 28px;
  padding: 0 4px 1px;
  border: 0;
  border-radius: 0;
  background: transparent;
`;

const CheckRow = styled.label`
  display: flex;
  align-items: center;
  gap: 7px;
  height: 20px;
  margin-top: 10px;
`;

const CheckBox = styled.input`
  appearance: none;
  width: 17px;
  height: 17px;
  margin: 0;
  border: 1px solid #333;
  background: #fff;
  display: grid;
  place-items: center;
  &:checked::after {
    content: "";
    width: 6px;
    height: 11px;
    margin-bottom: 3px;
    border: solid #222;
    border-width: 0 1px 1px 0;
    transform: rotate(40deg);
  }
`;

const DialogFooter = styled.div`
  display: flex;
  justify-content: flex-end;
  gap: 12px;
  padding: 38px 18px 21px;
`;

/* ---------- data ---------- */

type Feature = { icon: string; lines: string[]; col?: number };

const groups: { title: string; items: Feature[] }[] = [
  {
    title: "ASP.NET",
    items: [
      { icon: "compile", lines: [".NET 编译"] },
      { icon: "error404", lines: [".NET 错误页"] },
      { icon: "globalize", lines: [".NET 全球化"] },
      { icon: "rules", lines: [".NET 授权规", "则"] },
      { icon: "trust", lines: [".NET 信任级", "别"] },
      { icon: "smtp", lines: ["SMTP 电子", "邮件"] },
    ],
  },
  {
    title: "FTP",
    items: [
      { icon: "ftpIp", lines: ["FTP IP 地址", "和域限制"] },
      { icon: "ftpSsl", lines: ["FTP SSL 设", "置"] },
      { icon: "ftpLogin", lines: ["FTP 登录尝", "试限制"] },
      { icon: "ftpWall", lines: ["FTP 防火墙", "支持"] },
      { icon: "ftpBrowse", lines: ["FTP 目录浏", "览"] },
      { icon: "ftpFilter", lines: ["FTP 请求筛", "选"] },
    ],
  },
  {
    title: "IIS",
    items: [
      { icon: "asp", lines: ["ASP"] },
      { icon: "cgi", lines: ["CGI"] },
      { icon: "header", lines: ["FastCGI 设", "置"] },
      { icon: "header", lines: ["HTTP 响应标", "头"] },
      { icon: "redirect", lines: ["HTTP 重定向"] },
      { icon: "ip", lines: ["IP 地址和域", "限制"] },
      { icon: "worker", lines: ["工作进程"], col: 14 },
      { icon: "modules", lines: ["模块"] },
      { icon: "defaultDoc", lines: ["默认文档"] },
      { icon: "browse", lines: ["目录浏览"] },
      { icon: "filter", lines: ["请求筛选"] },
      { icon: "log", lines: ["日志"] },
      { icon: "auth", lines: ["身份验证"] },
      { icon: "failed", lines: ["失败请求跟", "踪规则"] },
      { icon: "rules", lines: ["授权规则"] },
      { icon: "cache", lines: ["输出缓存"] },
      { icon: "compress", lines: ["压缩"] },
    ],
  },
  {
    title: "管理",
    items: [
      { icon: "checklist", lines: ["Shared", "Configur..."] },
      { icon: "delegate", lines: ["功能委派"] },
      { icon: "cert", lines: ["集中式证书"] },
      { icon: "editor", lines: ["配置编辑器"] },
    ],
  },
];

const actions: { text: string; icon?: string; size?: number; divided?: boolean; disabled?: boolean }[] = [
  { text: "重新启动", icon: "restart", size: 18 },
  { text: "启动", icon: "start", size: 16, disabled: true },
  { text: "停止", icon: "stop", size: 15, divided: true },
  { text: "查看应用程序池" },
  { text: "查看网站", divided: true },
  { text: "更改 .NET Framework 版本", divided: true },
  { text: "获取新的 Web 平台组件", icon: "webpi", size: 18, divided: true },
  { text: "帮助", icon: "help", size: 20 },
];

const Key = ({ text, k, tail = "" }: { text: string; k: string; tail?: string }) => (
  <span>{text}(<u>{k}</u>){tail}</span>
);

const Chevron = () => (
  <svg width="12" height="7" viewBox="0 0 12 7" aria-hidden="true">
    <path d="M1 1 6 6 11 1" fill="none" stroke="#555" strokeWidth="1.300" />
  </svg>
);

/* ---------- sections ---------- */

const ConnectionsPanel = () => (
  <Connections>
    <PanelHeading>连接</PanelHeading>
    <PanelTools>
      <button type="button" aria-label="连接到"><Icon name="connect" size={18} /></button>
      <ToolDivider />
    </PanelTools>
    <Tree>
      <li>
        <TreeRow $depth={0}>
          <TreeToggle>
            <svg width="11" height="8" viewBox="0 0 11 8"><path d="M1 1 5.500 6 10 1" fill="none" stroke="#444" strokeWidth="2" /></svg>
          </TreeToggle>
          <TreeStem />
          <TreeLabel type="button" $selected><Icon name="siteServer" />PC01 (PC32\lenovo)</TreeLabel>
        </TreeRow>
      </li>
      <li>
        <TreeRow $depth={1}>
          <TreeToggle><TreeBranch /></TreeToggle>
          <TreeStem />
          <TreeLabel type="button"><Icon name="pool" />应用程序池</TreeLabel>
        </TreeRow>
      </li>
      <li>
        <TreeRow $depth={1}>
          <TreeToggle>
            <svg width="8" height="11" viewBox="0 0 8 11"><path d="M1 1 6 5.500 1 10" fill="none" stroke="#a0a0a0" strokeWidth="2" /></svg>
          </TreeToggle>
          <TreeStem />
          <TreeLabel type="button"><Icon name="sites" />网站</TreeLabel>
        </TreeRow>
      </li>
    </Tree>
  </Connections>
);

const FeaturePane = () => (
  <Center>
    <Home>
      <HomeHeader>
        <Icon name="siteServer" size={42} />
        <HomeTitle>PC01 主页</HomeTitle>
      </HomeHeader>
      <FeatureBox>
        <FeatureTools>
          <label htmlFor="filter">筛选:</label>
          <Combo $w={151}><ComboInput id="filter" type="text" /><DropArrow /></Combo>
          <BarButton type="button" $ml={6} $muted>
            <Icon name="funnel" size={18} /><Key text="开始" k="G" />
          </BarButton>
          <BarButton type="button" $ml={15} $muted aria-label="开始选项"><DropArrow muted /></BarButton>
          <BarButton type="button" $ml={6}>
            <Icon name="showAll" /><Key text="全部显示" k="A" />
          </BarButton>
          <BarDivider />
          <label htmlFor="grouping">分组依据:</label>
          <Combo $w={144}>
            <ComboSelect id="grouping"><option>区域</option></ComboSelect>
            <DropArrow />
          </Combo>
          <BarButton type="button" $ml={4} aria-label="视图"><Icon name="viewMode" /><DropArrow /></BarButton>
        </FeatureTools>
        {groups.map((g) => (
          <section key={g.title}>
            <GroupHeading>
              {g.title}
              <GroupLine />
              <svg width="8" height="7" viewBox="0 0 8 7" aria-hidden="true">
                <path d="M1 6 4 2 7 6" fill="none" stroke="#0a3296" strokeWidth="2.400" />
              </svg>
            </GroupHeading>
            <FeatureGrid>
              {g.items.map((f) => (
                <FeatureCell key={f.lines.join("")} $col={f.col}>
                  <FeatureButton type="button">
                    <Icon name={f.icon} size={40} />
                    <span>
                      {f.lines.map((l, i) => (
                        <React.Fragment key={l}>{i > 0 && <br />}{l}</React.Fragment>
                      ))}
                    </span>
                  </FeatureButton>
                </FeatureCell>
              ))}
            </FeatureGrid>
          </section>
        ))}
      </FeatureBox>
    </Home>
    <ViewTabs>
      <ViewTab type="button" $active><Icon name="featureView" />功能视图</ViewTab>
      <ViewTab type="button"><Icon name="content" />内容视图</ViewTab>
    </ViewTabs>
  </Center>
);

const ActionsPanel = () => (
  <Actions>
    <PanelHeading>操作</PanelHeading>
    <ActionList>
      <ActionRow><ActionTitle><ActionIcon />管理服务器</ActionTitle></ActionRow>
      {actions.map((a) => {
        const face = (
          <>
            <ActionIcon>{a.icon && <Icon name={a.icon} size={a.size} />}</ActionIcon>
            {a.text}
          </>
        );
        return (
          <ActionRow key={a.text} $divided={a.divided}>
            {a.disabled
              ? <ActionDisabled type="button" disabled>{face}</ActionDisabled>
              : <ActionLink href="#">{face}</ActionLink>}
          </ActionRow>
        );
      })}
    </ActionList>
  </Actions>
);

const AddSiteDialog = () => (
  <DialogLayer>
    <Dialog role="dialog" aria-label="添加网站" onSubmit={(e) => e.preventDefault()}>
      <DialogTitle>
        <DialogHeading>添加网站</DialogHeading>
        <WindowButton type="button">?</WindowButton>
        <WindowButton type="button" aria-label="关闭">
          <svg width="14" height="14" viewBox="0 0 14 14"><path d="M1 1 13 13M13 1 1 13" stroke="#111" strokeWidth="1.200" /></svg>
        </WindowButton>
      </DialogTitle>
      <DialogBody>
        <FieldRow $gap={9}>
          <Field $w={267}>
            <FieldLabel htmlFor="siteName"><Key text="网站名称" k="S" tail=":" /></FieldLabel>
            <ActiveTextBox id="siteName" type="text" />
          </Field>
          <Field $w={233}>
            <FieldLabel htmlFor="pool" $muted><Key text="应用程序池" k="L" tail=":" /></FieldLabel>
            <TextBox id="pool" type="text" readOnly defaultValue="DefaultAppPool" />
          </Field>
          <PickButton type="button" $w={123} $mt={25}><Key text="选择" k="E" tail="..." /></PickButton>
        </FieldRow>
        <Group $mt={8}>
          <Legend>内容目录</Legend>
          <FieldRow $gap={8}>
            <Field $w={379} $gap={4}>
              <FieldLabel htmlFor="path"><Key text="物理路径" k="P" tail=":" /></FieldLabel>
              <TextBox id="path" type="text" />
            </Field>
            <PickButton type="button" $w={40} $mt={23}>...</PickButton>
          </FieldRow>
          <Note $mt={6}>传递身份验证</Note>
          <FieldRow $gap={32} $mt={18}>
            <PushButton type="button" $w={108}><Key text="连接为" k="C" tail="..." /></PushButton>
            <PushButton type="button" $w={113} disabled><Key text="测试设置" k="G" tail="..." /></PushButton>
          </FieldRow>
        </Group>
        <BindingGroup $mt={12}>
          <Legend>绑定</Legend>
          <FieldRow $gap={10}>
            <Field $w={145}>
              <FieldLabel htmlFor="type"><Key text="类型" k="T" tail=":" /></FieldLabel>
              <SelectBox $grey>
                <SelectField id="type"><option>http</option></SelectField>
                <Chevron />
              </SelectBox>
            </Field>
            <Field $w={266}>
              <FieldLabel htmlFor="ip" $indent={0}><Key text="IP 地址" k="I" tail=":" /></FieldLabel>
              <SelectBox>
                <SelectField id="ip"><option>全部未分配</option></SelectField>
                <Chevron />
              </SelectBox>
            </Field>
            <Field $w={72}>
              <FieldLabel htmlFor="port" $indent={0}><Key text="端口" k="O" tail=":" /></FieldLabel>
              <TextBox id="port" type="text" defaultValue="80" />
            </Field>
          </FieldRow>
          <FieldRow $gap={0} $mt={17}>
            <Field $w={378}>
              <FieldLabel htmlFor="host"><Key text="主机名" k="H" tail=":" /></FieldLabel>
              <TextBox id="host" type="text" />
            </Field>
          </FieldRow>
          <Note $mt={12}>示例: www.contoso.com 或 marketing.contoso.com</Note>
        </BindingGroup>
        <CheckRow>
          <CheckBox type="checkbox" defaultChecked />
          <Key text="立即启动网站" k="M" />
        </CheckRow>
      </DialogBody>
      <DialogFooter>
        <PushButton type="submit" $w={114} disabled>确定</PushButton>
        <PushButton type="button" $w={121}>取消</PushButton>
      </DialogFooter>
    </Dialog>
  </DialogLayer>
);

const TaskbarStrip = () => (
  <Taskbar>
    <TaskButton $w={60} aria-label="开始">
      <svg width="20" height="20" viewBox="0 0 20 20" fill="#fff"><path d="M0 3 8 2V9.500H0ZM9 1.800 20 0V9.500H9ZM0 10.500H8V18L0 17ZM9 10.500H20V20L9 18.300Z" /></svg>
    </TaskButton>
    <TaskButton $w={60} aria-label="搜索">
      <svg width="22" height="22" viewBox="0 0 22 22" fill="none" stroke="#fff" strokeWidth="1.500"><circle cx="13.500" cy="8" r="6.500" /><path d="M9 13 1 21" /></svg>
    </TaskButton>
    <TaskButton $w={60} aria-label="Cortana">
      <svg width="20" height="20" viewBox="0 0 20 20"><circle cx="10" cy="10" r="8" fill="none" stroke="#fff" strokeWidth="3" /></svg>
    </TaskButton>
    <TaskButton $w={60} aria-label="任务视图">
      <svg width="20" height="20" viewBox="0 0 20 20" fill="none" stroke="#fff" strokeWidth="1.400"><path d="M1 0V4H13V0M1 20V16H13V20M1 6.500H13V13.500H1ZM18.500 0V5M18.500 11V20" /><rect x="17.500" y="7" width="2" height="2" fill="#fff" /></svg>
    </TaskButton>
    <TaskButton $w={68} $line aria-label="Microsoft Edge">
      <svg width="30" height="30" viewBox="0 0 30 30">
        <circle cx="15" cy="15" r="15" fill="url(#edgeBottom)" />
        <path d="M0 14C1 5 8 0 15 0 24 0 30 6 30 13 30 18 26 20 22 20 19 20 18 19 18 18 20 15 18 9 11 9 6 9 2 11 0 14Z" fill="url(#edgeTop)" />
        <path d="M11 13C6 18 9 29 19 29.500 23 29 26 26 28 23 22 26 14 24 14 17 14 15 15 14 16 13 14 12 12 12 11 13Z" fill="#0e4f94" />
        <path d="M18 18C19 15 18 13 16 13 13 14 13 20 17 22 21 24 26 23 29 21 27 24 30 19 30 17 28 20 25 20.500 22 20 19 20 18 19 18 18Z" fill="#22353f" />
      </svg>
    </TaskButton>
    <TaskButton $w={57} $line aria-label="文件资源管理器">
      <svg width="28" height="24" viewBox="0 0 28 24"><path d="M0 0H11L13 3H28V8H0Z" fill="#e9a211" /><path d="M0 5H12L14 3H28V23H0Z" fill="#fdd568" /><path d="M5 24V15Q5 13 7 13H21Q23 13 23 15V24H18V18H10V24Z" fill="#3f97dc" /></svg>
    </TaskButton>
    <TaskButton $w={64} aria-label="SQL Server Management Studio">
      <svg width="28" height="28" viewBox="0 0 28 28"><path d="M21 2H27V8M7 27H1V20" fill="none" stroke="#4ba24b" strokeWidth="3" /><path d="M3 3H18V18Q10 23 3 18Z" fill="#fcd645" /><ellipse cx="10.500" cy="4" rx="7.500" ry="3" fill="#f0aa58" /><path d="M13 14 26 27M25 14 13 27" stroke="#1769b4" strokeWidth="3" /><path d="M11 17 16 12M23 12 27 17" stroke="#1769b4" strokeWidth="3" /></svg>
    </TaskButton>
    <TaskButton $w={62} aria-label="PowerShell">
      <svg width="28" height="22" viewBox="0 0 28 22"><path d="M4 0H28L24 22H0Z" fill="#3f75d8" /><path d="M9 4 16 11 7 18M15 18H21" fill="none" stroke="#fff" strokeWidth="2.600" /></svg>
    </TaskButton>
    <TaskButton $w={62} $line aria-label="Visual Studio">
      <svg width="30" height="30" viewBox="0 0 30 30"><path d="M21 0 30 4V26L21 30Z" fill="#c896fa" /><path d="M0 9 4 6 21 22V30L0 12Z" fill="#8d5bd0" /><path d="M0 21 21 0V9L4 24 0 22Z" fill="#a877e8" /><path d="M0 9 4 11V19L0 22Z" fill="#5f348f" /></svg>
    </TaskButton>
    <TaskButton $w={61} $active aria-label="IIS 管理器"><Icon name="manager" size={30} /></TaskButton>
    <Tray>
      <svg width="16" height="9" viewBox="0 0 16 9" fill="none" stroke="#fff" strokeWidth="1.400"><path d="M0 8.500 8 1 16 8.500" /></svg>
      <svg width="21" height="17" viewBox="0 0 21 17" fill="none" stroke="#fff" strokeWidth="1.400"><path d="M5 1H20V12H3V7M7 16H15M11 12V16M1 1H5V6H1ZM3 6V9" /></svg>
      <svg width="19" height="15" viewBox="0 0 19 15" fill="none" stroke="#fff" strokeWidth="1.400"><path d="M1 5H3L7 1V14L3 11H1ZM11 4 18 11M18 4 11 11" /></svg>
      <Language>英</Language>
      <Clock><span>19:22</span><span>2023/9/21</span></Clock>
      <svg width="20" height="20" viewBox="0 0 20 20"><path d="M0 1H20V17H13L10 20 7 17H0Z" fill="#fff" /><path d="M4 5H16M4 9H16M4 13H12" stroke="#1a2640" strokeWidth="1.300" /></svg>
      <TrayEnd />
    </Tray>
  </Taskbar>
);

export default function App() {
  return (
    <Desktop>
      <GlobalStyle />
      <Defs />
      <TitleBar>
        <Icon name="manager" />
        <WindowTitle>Internet Information Services (IIS)管理器</WindowTitle>
        <WindowButtons>
          <WindowButton type="button" aria-label="最小化">
            <svg width="12" height="12" viewBox="0 0 12 12"><path d="M0 5.500H12" stroke="#999" /></svg>
          </WindowButton>
          <WindowButton type="button" aria-label="还原">
            <svg width="12" height="12" viewBox="0 0 12 12" fill="none" stroke="#999"><path d="M0.500 2.500H9.500V11.500H0.500ZM2.500 2.500V0.500H11.500V9.500H9.500" /></svg>
          </WindowButton>
          <WindowButton type="button" aria-label="关闭">
            <svg width="12" height="12" viewBox="0 0 12 12"><path d="M0 0 12 12M12 0 0 12" stroke="#999" /></svg>
          </WindowButton>
        </WindowButtons>
      </TitleBar>
      <TopMark />
      <AddressBar>
        <NavButtons>
          <button type="button" aria-label="后退">
            <svg width="16" height="12" viewBox="0 0 16 12" fill="none" stroke="#9aa6b4" strokeWidth="2.200"><path d="M16 6H2M7 1 2 6 7 11" /></svg>
          </button>
          <button type="button" aria-label="前进">
            <svg width="16" height="12" viewBox="0 0 16 12" fill="none" stroke="#9aa6b4" strokeWidth="2.200"><path d="M0 6H14M9 1 14 6 9 11" /></svg>
          </button>
        </NavButtons>
        <Crumbs>
          <Icon name="siteServer" />
          <RightArrow />
          <CrumbButton type="button">PC01</CrumbButton>
          <RightArrow />
        </Crumbs>
        <ToolButton type="button" aria-label="刷新"><Icon name="goRefresh" /></ToolButton>
        <ToolButton type="button" aria-label="停止"><Icon name="stopNav" /></ToolButton>
        <ToolButton type="button" aria-label="主页"><Icon name="home" /></ToolButton>
        <VLine />
        <ToolButton type="button" aria-label="帮助"><Icon name="help" /><DropArrow /></ToolButton>
      </AddressBar>
      <MenuBar>
        <button type="button"><Key text="文件" k="F" /></button>
        <button type="button"><Key text="视图" k="V" /></button>
        <button type="button"><Key text="帮助" k="H" /></button>
      </MenuBar>
      <Workspace>
        <ConnectionsPanel />
        <FeaturePane />
        <ActionsPanel />
      </Workspace>
      <StatusBar>
        <span>就绪</span>
        <Icon name="siteServer" />
      </StatusBar>
      <TaskbarStrip />
      <Watermark>CSDN @moyv</Watermark>
      <AddSiteDialog />
    </Desktop>
  );
}
